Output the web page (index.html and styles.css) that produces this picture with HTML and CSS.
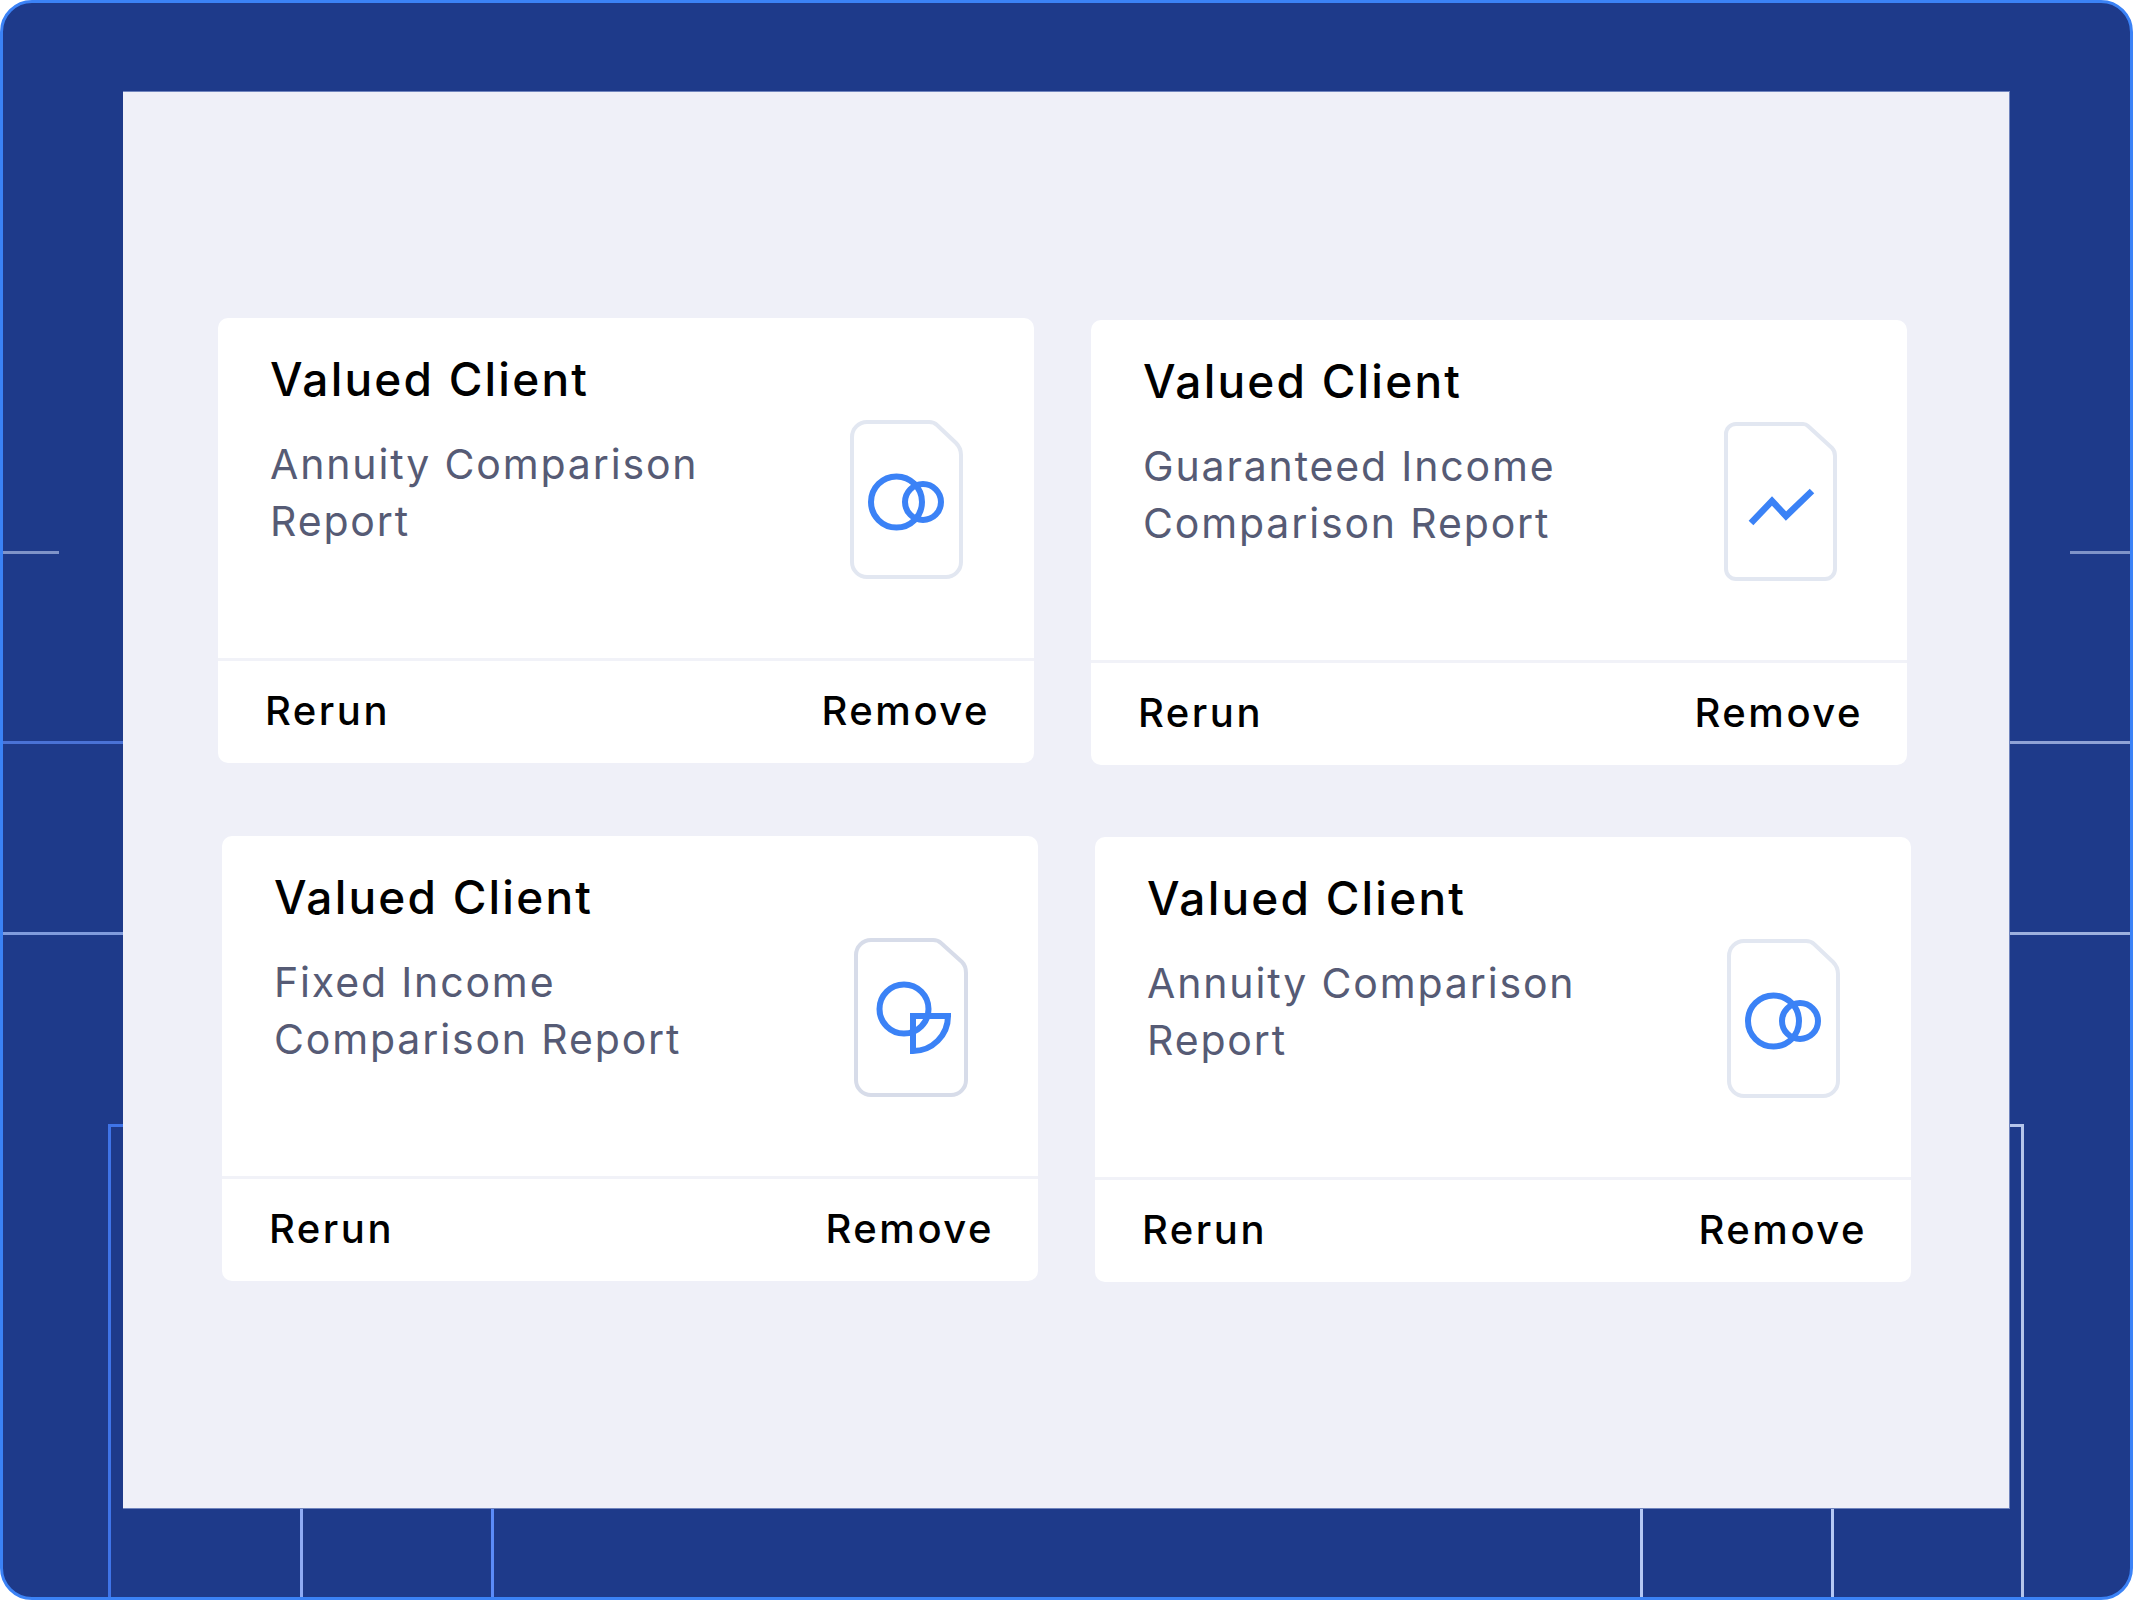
FILE: index.html
```html
<!DOCTYPE html>
<html lang="en">
<head>
<meta charset="utf-8">
<title>Saved reports</title>
<link rel="stylesheet" href="styles.css">
</head>
<body>
<div class="frame">
  <span class="rule h y551 left-stub"></span>
  <span class="rule h y551 right-stub"></span>
  <span class="rule h y742 left-long"></span>
  <span class="rule h y742 right-long tone-b"></span>
  <span class="rule h y933 left-long tone-c"></span>
  <span class="rule h y933 right-long tone-d"></span>
  <span class="rule v x108"></span>
  <span class="rule h stub-l"></span>
  <span class="rule v x300"></span>
  <span class="rule v x491"></span>
  <span class="rule v x1639"></span>
  <span class="rule v x1830"></span>
  <span class="rule v x2021"></span>
  <span class="rule h stub-r"></span>

  <main class="panel">
    <div class="row row-top">
      <article class="card">
        <div class="card-body">
          <div class="card-text">
            <h2 class="client">Valued Client</h2>
            <p class="report">Annuity Comparison<br>Report</p>
          </div>
          <svg class="doc" viewBox="0 0 116 162" width="116" height="162" aria-hidden="true">
            <path class="sheet" d="M18 3H80Q85 3 88 6L107 24Q112 29 112 36V143A15 15 0 0 1 97 158H18A15 15 0 0 1 3 143V18A15 15 0 0 1 18 3Z"/>
            <circle class="mark" cx="47.5" cy="83" r="25.5"/>
            <circle class="mark" cx="74" cy="83" r="18"/>
          </svg>
        </div>
        <div class="card-foot"><span class="action">Rerun</span><span class="action">Remove</span></div>
      </article>
      <article class="card nudge-2">
        <div class="card-body">
          <div class="card-text">
            <h2 class="client">Valued Client</h2>
            <p class="report">Guaranteed Income<br>Comparison Report</p>
          </div>
          <svg class="doc" viewBox="0 0 116 162" width="116" height="162" aria-hidden="true">
            <path class="sheet" d="M14 3H81Q84 3 86 5L110 27Q113 30 113 35V148A10 10 0 0 1 103 158H14A10 10 0 0 1 4 148V13A10 10 0 0 1 14 3Z"/>
            <path class="mark line" d="M29 102L50 80L64 95L90 70"/>
          </svg>
        </div>
        <div class="card-foot"><span class="action">Rerun</span><span class="action">Remove</span></div>
      </article>
    </div>
    <div class="row row-bottom">
      <article class="card">
        <div class="card-body">
          <div class="card-text">
            <h2 class="client">Valued Client</h2>
            <p class="report">Fixed Income<br>Comparison Report</p>
          </div>
          <svg class="doc" viewBox="0 0 116 162" width="116" height="162" aria-hidden="true">
            <path class="sheet dark" d="M18 3H80Q85 3 88 6L109 25Q113 29 113 36V143A15 15 0 0 1 98 158H18A15 15 0 0 1 3 143V18A15 15 0 0 1 18 3Z"/>
            <circle class="mark" cx="51" cy="72" r="24.5"/>
            <path class="mark" d="M60 79H95A35 35 0 0 1 60 114Z"/>
          </svg>
        </div>
        <div class="card-foot"><span class="action">Rerun</span><span class="action">Remove</span></div>
      </article>
      <article class="card nudge-1">
        <div class="card-body">
          <div class="card-text">
            <h2 class="client">Valued Client</h2>
            <p class="report">Annuity Comparison<br>Report</p>
          </div>
          <svg class="doc" viewBox="0 0 116 162" width="116" height="162" aria-hidden="true">
            <path class="sheet" d="M18 3H80Q85 3 88 6L107 24Q112 29 112 36V143A15 15 0 0 1 97 158H18A15 15 0 0 1 3 143V18A15 15 0 0 1 18 3Z"/>
            <circle class="mark" cx="47.5" cy="83" r="25.5"/>
            <circle class="mark" cx="74" cy="83" r="18"/>
          </svg>
        </div>
        <div class="card-foot"><span class="action">Rerun</span><span class="action">Remove</span></div>
      </article>
    </div>
  </main>
</div>
</body>
</html>
```
FILE: styles.css
```css
* { box-sizing: border-box; }
html, body { margin: 0; background: #fff; }
.frame {
  position: relative;
  width: 2133px;
  height: 1600px;
  padding: 88px 121px 0 120px;
  background: #1e3a8a;
  border: 3px solid #3b82f6;
  border-radius: 32px;
  overflow: hidden;
  font-family: Inter, "Liberation Sans", sans-serif;
}
.rule { position: absolute; display: block; }
.h { height: 3px; background: #7f93c8; }
.v { width: 3px; top: 1505px; bottom: 0; }
.y551 { top: 548px; }
.y742 { top: 738px; }
.y933 { top: 929px; }
.left-stub { left: 0; width: 56px; }
.right-stub { right: 0; width: 60px; }
.left-long { left: 0; width: 122px; background: #4a72d6; }
.right-long { right: 0; width: 122px; }
.tone-b { background: #8fa2d6; }
.tone-c { background: #809bdc; }
.tone-d { background: #9db0de; }
.x108 { left: 105px; top: 1121px; background: #3f74e8; }
.stub-l { left: 105px; top: 1121px; width: 18px; background: #3f74e8; }
.x300 { left: 297px; background: #8fabf5; }
.x491 { left: 488px; background: #5b8bf8; }
.x1639 { left: 1637px; background: #b5c8f5; }
.x1830 { left: 1828px; background: #b5c8f5; }
.x2021 { left: 2018px; top: 1121px; background: #b5c5ea; }
.stub-r { left: 2000px; top: 1121px; width: 21px; background: #b5c5ea; }

.panel {
  position: relative;
  width: 1887px;
  height: 1418px;
  padding: 226px 0 0 95px;
  background: #eff0f8;
  border-top: 1px solid #6f84bd;
  border-right: 1px solid #6f84bd;
  border-bottom: 1px solid #6f84bd;
}
.row { display: flex; gap: 57px; align-items: flex-start; }
.row-bottom { margin: 71px 0 0 4px; }
.card {
  width: 816px;
  height: 445px;
  display: flex;
  flex-direction: column;
  background: #fff;
  border-radius: 10px;
}
.nudge-2 { margin-top: 2px; }
.nudge-1 { margin-top: 1px; }
.card-body {
  flex: 1;
  display: flex;
  justify-content: space-between;
  padding: 101px 69px 0 52px;
}
.card-text { margin-top: -101px; padding-top: 36px; }
.client {
  margin: 0;
  font-size: 46px;
  line-height: 50px;
  font-weight: 500;
  letter-spacing: 2.2px;
  color: #000;
}
.report {
  margin: 32px 0 0;
  font-size: 41px;
  line-height: 57px;
  font-weight: 400;
  letter-spacing: 1.85px;
  color: #565b75;
}
.doc { display: block; flex: none; }
.sheet { fill: #fff; stroke: #e2e7f1; stroke-width: 4; }
.sheet.dark { stroke: #d7dce9; }
.mark { fill: none; stroke: #3b82f6; stroke-width: 6; }
.mark.line { stroke-width: 6.5; }
.card-foot {
  height: 105px;
  display: flex;
  justify-content: space-between;
  align-items: center;
  padding: 0 44px 2px 47px;
  border-top: 3px solid #f1f2f8;
}
.action {
  font-size: 40px;
  line-height: 48px;
  font-weight: 500;
  letter-spacing: 2.5px;
  color: #000;
}
```
